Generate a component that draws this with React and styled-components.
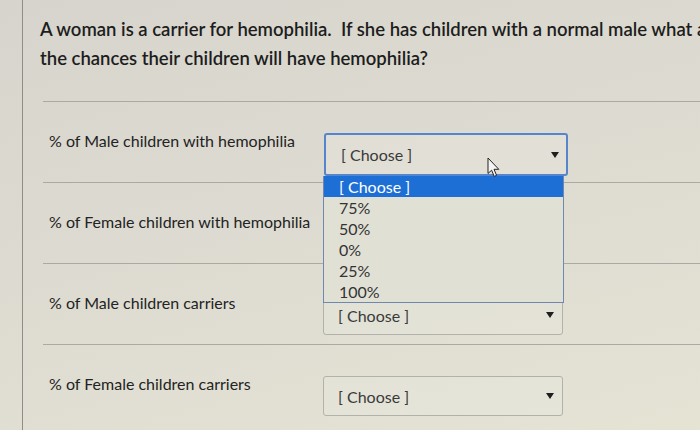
import React from 'react';
import styled, { createGlobalStyle, css } from 'styled-components';

const GlobalStyle = createGlobalStyle`
    html, body {
        margin: 0;
        padding: 0;
    }
    body {
        width: 700px;
        height: 430px;
        overflow: hidden;
        background: linear-gradient(165deg, #d6d4cc 0%, #dddbd1 45%, #e4e3d4 100%);
        font-family: Lato, "Liberation Sans", sans-serif;
    }
`;

const Screen = styled.div`
    position: relative;
    display: flex;
    width: 700px;
    height: 430px;
    overflow: hidden;
`;

const Gutter = styled.div`
    flex: none;
    width: 22px;
    border-right: 1.5px solid #8e8d88;
`;

const Panel = styled.div`
    flex: 1 1 auto;
    min-width: 0;
    padding-left: 17px;
`;

const Question = styled.div`
    box-sizing: border-box;
    height: 101px;
    padding-top: 15px;
    font-size: 18.5px;
    font-weight: 600;
    line-height: 29px;
    color: #1d1d1d;
    white-space: nowrap;
`;

const Rows = styled.div`
    margin-left: 3px;
`;

const Row = styled.div`
    box-sizing: border-box;
    display: grid;
    grid-template-columns: 280px 240px;
    align-items: start;
    height: 81px;
    padding-top: 31px;
    border-top: 1px solid #aaa9a2;
`;

const Label = styled.div`
    margin-top: -2px;
    padding-left: 6px;
    font-size: 16px;
    line-height: 20px;
    color: #232323;
`;

const SelectWrap = styled.div`
    position: relative;
`;

const focusedCss = css`
    height: 43px;
    margin-left: 1px;
    width: 244px;
    border: 2px solid #5585cc;
    padding: 0 7px 0 15px;
`;

const Select = styled.div`
    box-sizing: border-box;
    display: flex;
    align-items: center;
    justify-content: space-between;
    height: 40px;
    padding: 0 8px 0 14px;
    border: 1px solid #b2b1aa;
    border-radius: 3px;
    background: rgba(255, 255, 255, 0.12);
    font-size: 16px;
    color: #3a3a3a;
    visibility: ${(props) => (props.$covered ? 'hidden' : 'visible')};
    ${(props) => props.$focused && focusedCss}
`;

const Caret = styled.span`
    width: 0;
    height: 0;
    border-left: 4px solid transparent;
    border-right: 4px solid transparent;
    border-top: 6px solid #1f1f1f;
`;

const Menu = styled.ul`
    position: absolute;
    top: 100%;
    left: 0;
    z-index: 2;
    box-sizing: border-box;
    width: 241px;
    margin: 0;
    padding: 0;
    list-style: none;
    background: #e1e0d5;
    border: 1px solid #7088ad;
    border-top: none;
`;

const Option = styled.li`
    height: 21px;
    padding-left: 15px;
    font-size: 16px;
    line-height: 21px;
    color: #333;
    ${(props) =>
        props.$active &&
        css`
            background: #1d6fd5;
            color: #fff;
        `}
`;

const Cursor = styled.svg`
    position: absolute;
    left: 487px;
    top: 157px;
    z-index: 3;
`;

const rows = [
    { label: '% of Male children with hemophilia', focused: true, open: true },
    { label: '% of Female children with hemophilia', covered: true },
    { label: '% of Male children carriers' },
    { label: '% of Female children carriers' },
];

const options = ['[ Choose ]', '75%', '50%', '0%', '25%', '100%'];

function App() {
    return (
        <Screen>
            <GlobalStyle />
            <Gutter />
            <Panel>
                <Question>
                    <div>A woman is a carrier for hemophilia.&nbsp; If she has children with a normal male what are</div>
                    <div>the chances their children will have hemophilia?</div>
                </Question>
                <Rows>
                    {rows.map((row, index) => (
                        <Row key={index}>
                            <Label>{row.label}</Label>
                            <SelectWrap>
                                <Select $focused={row.focused} $covered={row.covered}>
                                    <span>[ Choose ]</span>
                                    <Caret />
                                </Select>
                                {row.open && (
                                    <Menu>
                                        {options.map((opt, i) => (
                                            <Option key={i} $active={i === 0}>
                                                {opt}
                                            </Option>
                                        ))}
                                    </Menu>
                                )}
                            </SelectWrap>
                        </Row>
                    ))}
                </Rows>
            </Panel>
            <Cursor width="13" height="21" viewBox="0 0 13 21">
                <path
                    d="M1 1 L1 16.5 L4.6 13.2 L7.2 19.4 L9.6 18.4 L7 12.3 L11.8 12.3 Z"
                    fill="#f4f4f2"
                    stroke="#222"
                    strokeWidth="1"
                    strokeLinejoin="round"
                />
            </Cursor>
        </Screen>
    );
}

export default App;
